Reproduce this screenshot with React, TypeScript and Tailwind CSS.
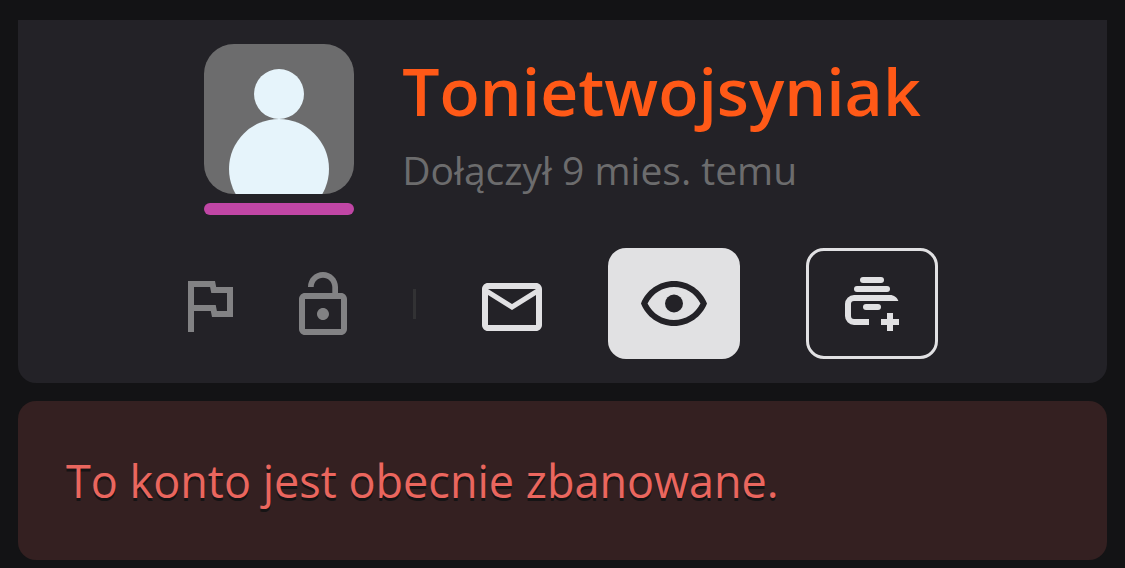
import type { ReactNode } from "react";

type IconButtonProps = {
  label: string;
  viewBox: string;
  className: string;
  children: ReactNode;
};

function IconButton({ label, viewBox, className, children }: IconButtonProps) {
  return (
    <button type="button" aria-label={label} className={`flex shrink-0 items-center justify-center ${className}`}>
      <svg viewBox={viewBox} className="h-[72px] w-[72px]" fill="currentColor" aria-hidden>
        {children}
      </svg>
    </button>
  );
}

function Avatar() {
  return (
    <div className="flex w-[150px] shrink-0 flex-col gap-[9px]">
      <div className="h-[150px] overflow-hidden rounded-[30px] bg-[#6c6c6d]">
        <svg viewBox="0 0 150 150" className="h-full w-full" fill="#e6f4fb" aria-hidden>
          <circle cx="75" cy="50" r="25" />
          <circle cx="75" cy="125" r="50" />
        </svg>
      </div>
      <div className="h-3 rounded-full bg-[#c046a5]" />
    </div>
  );
}

function Actions() {
  return (
    <div className="flex items-center justify-center gap-[54px] pr-3.5">
      <div className="flex gap-[42px] text-[#828284]">
        <IconButton label="Zgłoś" viewBox="0 -0.33 24 24" className="">
          <path d="M12.36 6l.4 2H18v6h-3.36l-.4-2H7V6h5.36M14 4H5v17h2v-7h5.6l.4 2h7V6h-5.6L14 4z" />
        </IconButton>
        <IconButton label="Zablokuj" viewBox="0 -0.33 24 24" className="">
          <path d="M12 17c1.1 0 2-.9 2-2s-.9-2-2-2-2 .9-2 2 .9 2 2 2zm6-9h-1V6c0-2.76-2.24-5-5-5S7 3.24 7 6h1.9c0-1.71 1.39-3.1 3.1-3.1 1.71 0 3.1 1.39 3.1 3.1v2H6c-1.1 0-2 .9-2 2v10c0 1.1.9 2 2 2h12c1.1 0 2-.9 2-2V10c0-1.1-.9-2-2-2zm0 12H6V10h12v10z" />
        </IconButton>
      </div>
      <div className="h-[30px] w-[3px] bg-[#323234]" />
      <IconButton label="Wiadomość" viewBox="0 -1 24 24" className="px-1.5 text-[#e1e1e3]">
        <path d="M22 6c0-1.1-.9-2-2-2H4c-1.1 0-2 .9-2 2v12c0 1.1.9 2 2 2h16c1.1 0 2-.9 2-2V6zm-2 0l-8 5-8-5h16zm0 12H4V8l8 5 8-5v10z" />
      </IconButton>
      <div className="flex gap-[66px]">
        <IconButton
          label="Obserwuj"
          viewBox="0 -0.33 24 24"
          className="h-[111px] w-[132px] rounded-[18px] bg-[#e1e1e3] text-[#232227]"
        >
          <path d="M12 6c3.79 0 7.17 2.13 8.82 5.5C19.17 14.87 15.79 17 12 17s-7.17-2.13-8.82-5.5C4.83 8.13 8.21 6 12 6m0-2C7 4 2.73 7.11 1 11.5 2.73 15.89 7 19 12 19s9.27-3.11 11-7.5C21.27 7.11 17 4 12 4z" />
          <circle cx="12" cy="11.5" r="3" />
        </IconButton>
        <IconButton
          label="Dodaj do listy"
          viewBox="0 0 24 24"
          className="h-[111px] w-[132px] rounded-[18px] border-3 border-[#e1e1e3] text-[#e1e1e3]"
        >
          <rect x="8" y="3" width="8" height="2" rx="1" />
          <rect x="6" y="6" width="12" height="2" rx="1" />
          <path d="M11 19H6a3 3 0 0 1-3-3v-4a3 3 0 0 1 3-3h12c1.3 0 2.4.8 2.8 2H6a1 1 0 0 0-1 1v4a1 1 0 0 0 1 1h5z" />
          <rect x="9" y="12" width="6" height="2" rx="1" />
          <path d="M17 15h2v2h2v2h-2v2h-2v-2h-2v-2h2z" />
        </IconButton>
      </div>
    </div>
  );
}

export default function App() {
  return (
    <div className="min-h-screen bg-[#131315] px-[18px] pt-5 pb-2 font-['Open_Sans',sans-serif] [font-kerning:none]">
      <section className="flex flex-col gap-[33px] rounded-b-[18px] bg-[#232227] py-6">
        <div className="flex justify-center gap-12">
          <Avatar />
          <div>
            <h1 className="text-[66px] leading-[93px] font-semibold text-[#ff5917]">Tonietwojsyniak</h1>
            <p className="text-[39px] leading-[66px] text-[#6c6c6d]">Dołączył 9 mies. temu</p>
          </div>
        </div>
        <Actions />
      </section>

      <p
        role="alert"
        className="mt-[18px] rounded-[18px] bg-[#342021] px-12 py-12 text-[45px] leading-[63px] text-[#ea665e] [text-shadow:0_3px_0_#161415]"
      >
        To konto jest obecnie zbanowane.
      </p>
    </div>
  );
}
